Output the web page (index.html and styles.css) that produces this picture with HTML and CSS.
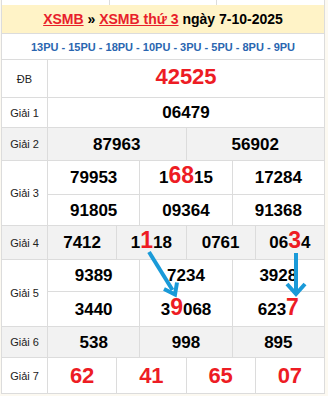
FILE: index.html
```html
<!DOCTYPE html>
<html lang="vi">
<head>
<meta charset="utf-8">
<title>XSMB thứ 3 ngày 7-10-2025</title>
<link rel="stylesheet" href="styles.css">
</head>
<body>
<div class="page">
  <div class="prev-row"><div class="pc"></div><div class="pc"></div><div class="pc"></div></div>
  <div class="board">
    <div class="head"><a class="lnk" href="#">XSMB</a>&nbsp;»&nbsp;<a class="lnk" href="#">XSMB thứ 3</a>&nbsp;ngày 7-10-2025</div>
    <div class="pu">13PU - 15PU - 18PU - 10PU - 3PU - 5PU - 8PU - 9PU</div>

    <div class="lbl">ĐB</div>
    <div class="c s12 db"><span class="n big red">42525</span></div>

    <div class="lbl">Giải 1</div>
    <div class="c s12"><span class="n">06479</span></div>

    <div class="lbl alt">Giải 2</div>
    <div class="c s6 alt"><span class="n">87963</span></div>
    <div class="c s6 alt"><span class="n">56902</span></div>

    <div class="lbl r2">Giải 3</div>
    <div class="c s4"><span class="n">79953</span></div>
    <div class="c s4"><span class="n">1<span class="hl">68</span>15</span></div>
    <div class="c s4"><span class="n">17284</span></div>
    <div class="c s4"><span class="n">91805</span></div>
    <div class="c s4"><span class="n">09364</span></div>
    <div class="c s4"><span class="n">91368</span></div>

    <div class="lbl alt">Giải 4</div>
    <div class="c s3 alt"><span class="n">7412</span></div>
    <div class="c s3 alt"><span class="n">1<span class="hl">1</span>18</span></div>
    <div class="c s3 alt"><span class="n">0761</span></div>
    <div class="c s3 alt"><span class="n">06<span class="hl">3</span>4</span></div>

    <div class="lbl r2">Giải 5</div>
    <div class="c s4"><span class="n">9389</span></div>
    <div class="c s4"><span class="n">7234</span></div>
    <div class="c s4"><span class="n">3928</span></div>
    <div class="c s4"><span class="n">3440</span></div>
    <div class="c s4"><span class="n">3<span class="hl">9</span>068</span></div>
    <div class="c s4"><span class="n">623<span class="hl">7</span></span></div>

    <div class="lbl alt">Giải 6</div>
    <div class="c s4 alt"><span class="n">538</span></div>
    <div class="c s4 alt"><span class="n">998</span></div>
    <div class="c s4 alt"><span class="n">895</span></div>

    <div class="lbl">Giải 7</div>
    <div class="c s3"><span class="n big red">62</span></div>
    <div class="c s3"><span class="n big red">41</span></div>
    <div class="c s3"><span class="n big red">65</span></div>
    <div class="c s3"><span class="n big red">07</span></div>
  </div>

  <svg class="arrows" width="328" height="396" viewBox="0 0 328 396" aria-hidden="true">
    <g fill="none" stroke="#1a9ad8" stroke-width="4" stroke-linejoin="miter">
      <path d="M149 252 L172.5 290"/>
      <path d="M164 289 L175 294.5 L177 282.5"/>
      <path d="M296 253 L296 293"/>
      <path d="M287 284 L296 294 L305 284"/>
    </g>
  </svg>
</div>
</body>
</html>
```

FILE: styles.css
```css
html, body {
  margin: 0;
  padding: 0;
  background: #fcf9f1;
}

body {
  font-family: "Liberation Sans", Arial, sans-serif;
  color: #000;
}

.page {
  position: relative;
  width: 328px;
  height: 396px;
  overflow: hidden;
}

.prev-row {
  margin-left: 1px;
  width: 324px;
  height: 5px;
  box-sizing: border-box;
  border-left: 1px solid #dcdcdc;
  border-right: 1px solid #dcdcdc;
  display: flex;
  background: #dcdcdc;
  gap: 1px;
}

.pc {
  flex: 1;
  background: #fff;
}

.board {
  margin-left: 1px;
  width: 324px;
  box-sizing: border-box;
  border-left: 1px solid #dcdcdc;
  border-right: 1px solid #dcdcdc;
  border-bottom: 1px solid #dcdcdc;
  background: #dcdcdc;
  display: grid;
  grid-template-columns: 45px repeat(12, 1fr);
  grid-template-rows: 28px 25px 37px 29px 32px 33px 30px 33px 31px 34px 30px 35px;
  gap: 1px;
}

.head {
  grid-column: 1 / -1;
  background: #fff3c7;
  display: flex;
  align-items: center;
  justify-content: center;
  font-size: 14px;
  font-weight: bold;
  color: #000;
}

.lnk {
  color: #e8212b;
  text-decoration: underline;
}

.pu {
  grid-column: 1 / -1;
  background: #fff;
  display: flex;
  align-items: center;
  justify-content: center;
  font-size: 11px;
  font-weight: bold;
  color: #2a66b0;
  padding-top: 1px;
}

.lbl {
  background: #fff;
  display: flex;
  align-items: center;
  justify-content: center;
  font-size: 11px;
  color: #222;
}

.r2 {
  grid-row: span 2;
}

.c {
  background: #fff;
  display: flex;
  align-items: center;
  justify-content: center;
}

.db {
  padding-bottom: 3px;
}

.alt {
  background: #f2f2f2;
}

.s12 { grid-column: span 12; }
.s6 { grid-column: span 6; }
.s4 { grid-column: span 4; }
.s3 { grid-column: span 3; }

.n {
  font-size: 17px;
  font-weight: bold;
  line-height: 1;
  color: #000;
}

.big {
  font-size: 22px;
}

.red {
  color: #ed1c24;
}

.hl {
  font-size: 23px;
  line-height: 0;
  color: #ed1c24;
}

.arrows {
  position: absolute;
  left: 0;
  top: 0;
  pointer-events: none;
}
```
